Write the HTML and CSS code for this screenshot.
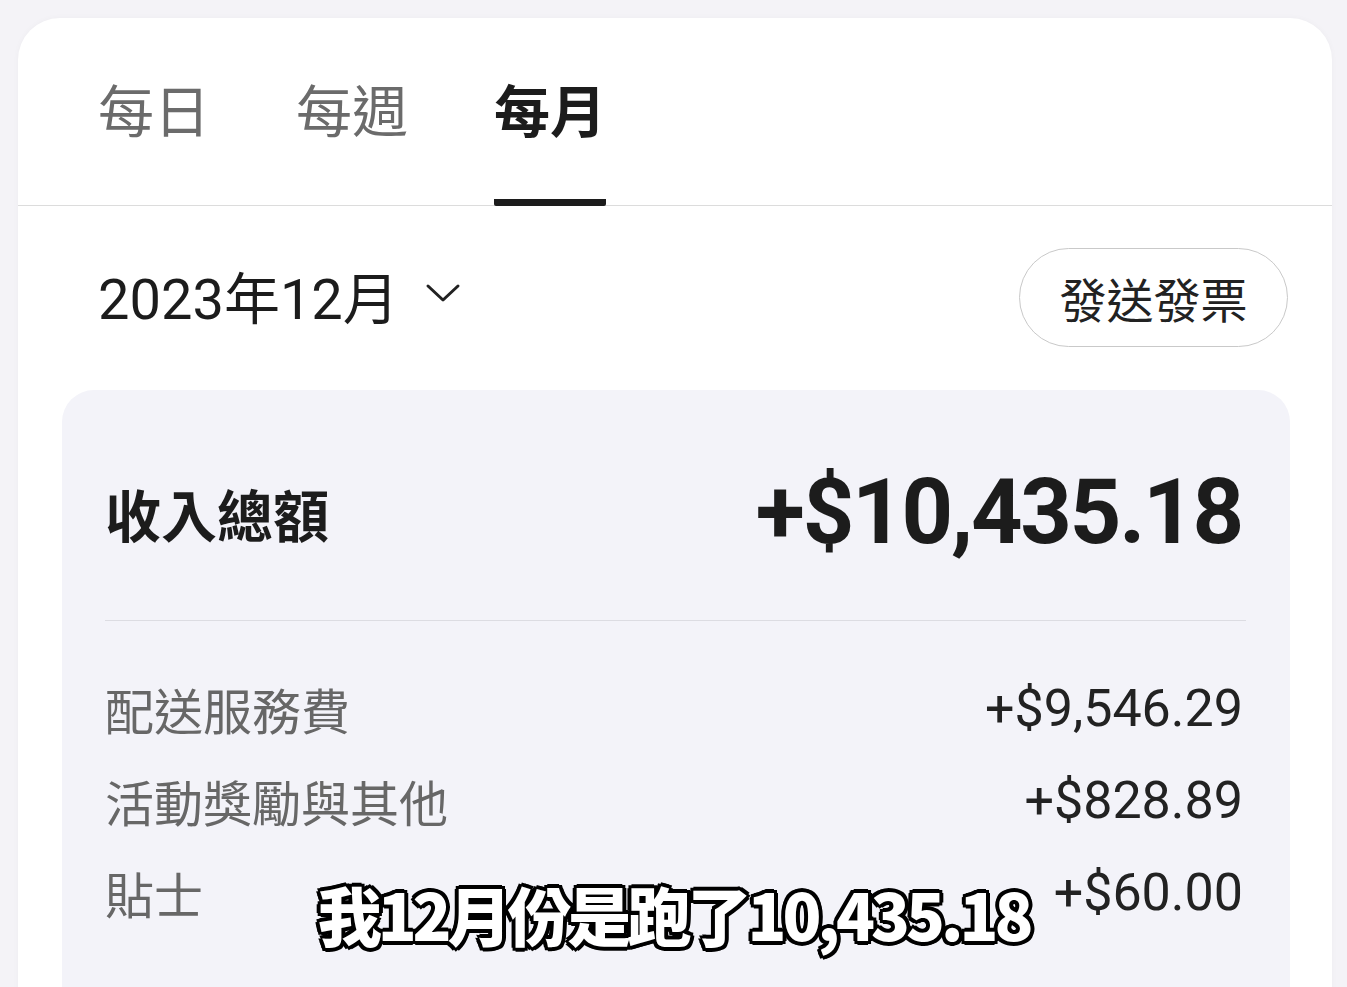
FILE: index.html
```html
<!DOCTYPE html>
<html lang="zh-Hant">
<head>
    <meta charset="UTF-8">
    <meta name="viewport" content="width=device-width, initial-scale=1.0">
    <title>收入 - 每月</title>
    <link rel="stylesheet" href="styles.css">
</head>
<body>

<div class="card">
    <nav class="tabs">
        <a class="tab">每日</a>
        <a class="tab">每週</a>
        <a class="tab active">每月</a>
    </nav>

    <div class="period-row">
        <button class="period-picker">
            <span>2023年12月</span>
            <svg class="chevron" width="36" height="22" viewBox="0 0 36 22">
                <path d="M3 4 L18 18 L33 4" fill="none" stroke="#222" stroke-width="3" stroke-linecap="round" stroke-linejoin="round"/>
            </svg>
        </button>
        <button class="invoice-btn">發送發票</button>
    </div>

    <div class="summary">
        <div class="total-row">
            <span class="total-label">收入總額</span>
            <span class="total-value">+$10,435.18</span>
        </div>
        <div class="breakdown">
            <div class="line">
                <span class="line-label">配送服務費</span>
                <span class="line-value">+$9,546.29</span>
            </div>
            <div class="line">
                <span class="line-label">活動獎勵與其他</span>
                <span class="line-value">+$828.89</span>
            </div>
            <div class="line">
                <span class="line-label">貼士</span>
                <span class="line-value">+$60.00</span>
            </div>
        </div>
    </div>
</div>

<div class="subtitle">我12月份是跑了10,435.18</div>

</body>
</html>
```

FILE: styles.css
```css
html, body {
    margin: 0;
    padding: 0;
    height: 987px;
    overflow: hidden;
}
body {
    font-family: Roboto, "Noto Sans CJK TC", sans-serif;
    background-color: #f4f3f7;
    color: #222;
    position: relative;
}
.card {
    margin: 18px 15px 0 18px;
    background: #fff;
    border-radius: 42px 42px 0 0;
    height: 1100px;
    box-shadow: 0 0 6px rgba(0, 0, 0, 0.03);
}

/* tabs */
.tabs {
    display: flex;
    gap: 86px;
    padding: 0 0 0 80px;
    border-bottom: 1px solid #dcdcdc;
}
.tab {
    font-size: 56px;
    line-height: 1;
    color: #6b6b6b;
    padding: 67px 0 58px;
    border-bottom: 7px solid transparent;
    margin-bottom: -1px;
    border-radius: 0 0 2px 2px;
}
.tab.active {
    color: #1c1c1c;
    font-weight: 700;
    border-bottom-color: #1c1c1c;
}

/* period row */
.period-row {
    display: flex;
    justify-content: space-between;
    align-items: center;
    padding: 42px 44px 0 80px;
}
.period-picker {
    display: flex;
    align-items: center;
    gap: 26px;
    border: none;
    background: none;
    padding: 0 0 6px;
    font-family: Roboto, "Noto Sans CJK TC", sans-serif;
    font-size: 56px;
    color: #1c1c1c;
}
.chevron {
    margin-top: -4px;
}
.invoice-btn {
    width: 269px;
    height: 99px;
    border: 1.5px solid #c9c9c9;
    border-radius: 50px;
    background: #fff;
    font-family: "Noto Sans CJK TC", sans-serif;
    font-size: 47px;
    color: #222;
    padding: 0;
}

/* summary box */
.summary {
    margin: 43px 42px 0 44px;
    background: #f3f3f9;
    border-radius: 32px 32px 0 0;
    padding: 0 44px 0 43px;
    height: 700px;
}
.total-row {
    display: flex;
    justify-content: space-between;
    align-items: center;
    height: 90px;
    padding: 77px 0 63px;
    border-bottom: 1.5px solid #dcdce2;
}
.total-label {
    font-family: "Noto Sans CJK TC", sans-serif;
    font-weight: 700;
    font-size: 56px;
    color: #1c1c1c;
}
.total-value {
    font-weight: 700;
    font-size: 90px;
    letter-spacing: -2.2px;
    color: #1c1c1c;
    padding-right: 4px;
}
.breakdown {
    padding-top: 41px;
}
.line {
    display: flex;
    justify-content: space-between;
    align-items: center;
    height: 92px;
}
.line-label {
    font-family: "Noto Sans CJK TC", sans-serif;
    font-size: 49px;
    color: #676767;
}
.line-value {
    font-size: 52px;
    color: #222;
    padding-right: 3px;
}

/* video subtitle overlay */
.subtitle {
    position: absolute;
    left: 0;
    right: 0;
    top: 867px;
    text-align: center;
    font-family: "Noto Sans CJK TC", sans-serif;
    font-weight: 900;
    font-size: 64px;
    letter-spacing: -4px;
    color: #fff;
    text-shadow:
        -3px -3px 0 #000, 3px -3px 0 #000, -3px 3px 0 #000, 3px 3px 0 #000,
        0 -4px 0 #000, 0 4px 0 #000, -4px 0 0 #000, 4px 0 0 #000;
}
```
